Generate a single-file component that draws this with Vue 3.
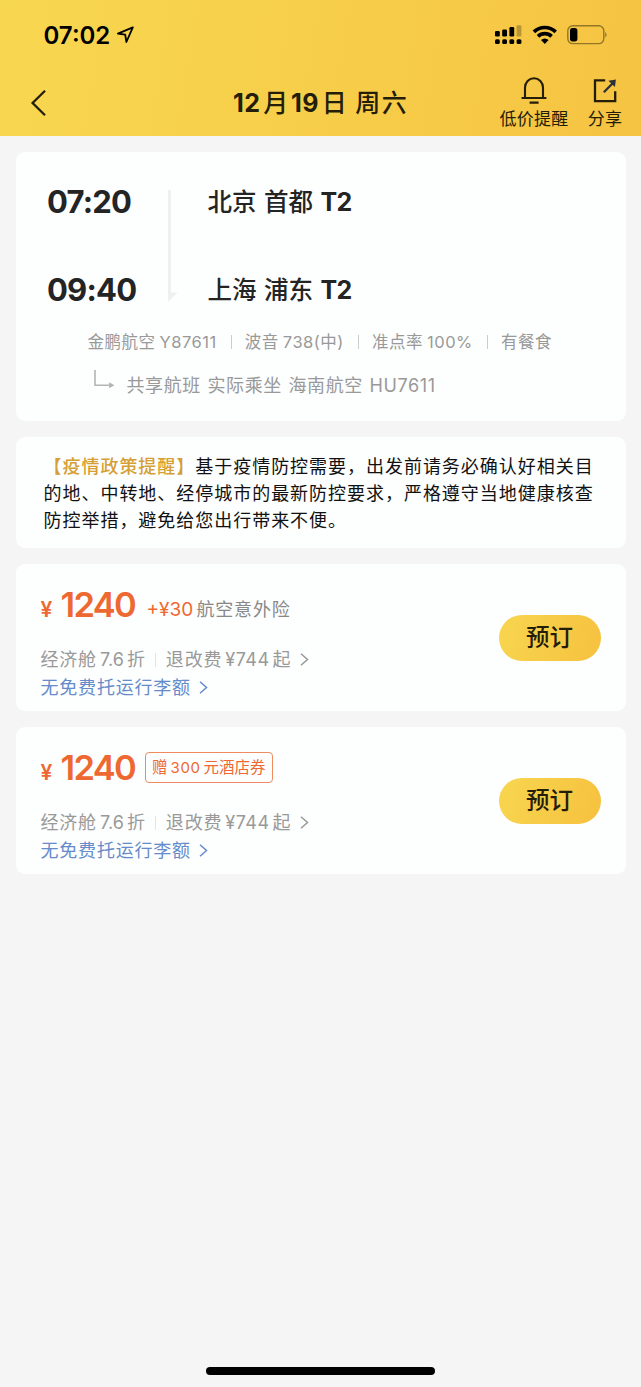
<script setup>
const offers = [
  { id: 1, price: '1240', extra: '+¥30', extraLabel: '航空意外险' },
  { id: 2, price: '1240', coupon: ['赠', '300', '元酒店券'] },
]
const stops = [
  { time: '07:20', city: '北京', airport: '首都', terminal: 'T2' },
  { time: '09:40', city: '上海', airport: '浦东', terminal: 'T2' },
]
</script>

<template>
  <div class="screen">
    <header class="top">
      <div class="status">
        <span class="clock">07:02</span>
        <svg class="loc" width="18" height="18" viewBox="0 0 18 18" fill="none" stroke="#000" stroke-width="1.8" stroke-linejoin="round">
          <path d="M15.8 1.4 L.9 7.7 L8.2 8.7 L9.4 16 Z" />
        </svg>
        <svg class="signal" width="28" height="20" viewBox="0 0 28 20">
          <rect x="0" y="6" width="4.8" height="5.5" rx="1.3" />
          <rect x="7.2" y="4.4" width="4.8" height="7.1" rx="1.3" />
          <rect x="14.4" y="2" width="4.8" height="9.5" rx="1.3" />
          <rect x="21.6" y="0.3" width="4.8" height="11.2" rx="1.3" opacity=".25" />
          <rect x="0" y="14.2" width="4.8" height="4.8" rx="1.5" />
          <rect x="7.2" y="14.2" width="4.8" height="4.8" rx="1.5" />
          <rect x="14.4" y="14.2" width="4.8" height="4.8" rx="1.5" />
          <rect x="21.6" y="14.2" width="4.8" height="4.8" rx="1.5" />
        </svg>
        <svg class="wifi" width="26" height="20" viewBox="0 0 26 20" fill="none" stroke="#000" stroke-width="3.6">
          <path d="M1.9 6.9 A15.6 15.6 0 0 1 23.7 6.9" />
          <path d="M6 11.4 A9.7 9.7 0 0 1 19.6 11.4" />
          <path d="M9 15 A5.4 5.4 0 0 1 16.6 15 L12.8 19 Z" fill="#000" stroke="none" />
        </svg>
        <svg class="battery" width="42" height="20" viewBox="0 0 42 20">
          <rect x="0.8" y="0.8" width="36" height="17.8" rx="5" fill="none" stroke="#000" stroke-opacity=".4" stroke-width="1.4" />
          <rect x="3" y="3" width="7.4" height="13.4" rx="2.6" />
          <path d="M38.3 6.7 Q40.8 9.7 38.3 12.7 Z" fill-opacity=".45" />
        </svg>
      </div>
      <div class="nav">
        <svg class="back" width="18" height="28" viewBox="0 0 18 28" fill="none" stroke="#241d08" stroke-width="2.3">
          <path d="M15 1.8 L2.6 14 L15 26.2" />
        </svg>
        <h1 class="title"><b>12</b><span>月</span><b>19</b><span>日</span><span class="week">周六</span></h1>
        <div class="action alert">
          <svg width="26" height="28" viewBox="0 0 26 28" fill="none" stroke="#241d08" stroke-width="2.1">
            <path d="M4 21 V10.6 A9 9.3 0 0 1 22 10.6 V21" />
            <path d="M.6 21 H25.4 M8.6 25.6 H17.6" />
          </svg>
          <span>低价提醒</span>
        </div>
        <div class="action share">
          <svg width="26" height="28" viewBox="0 0 26 28" fill="none" stroke="#241d08" stroke-width="2.3">
            <path d="M13.2 3.4 H3 V24.2 H23.2 V14.2" />
            <path d="M11.8 15.2 L21 6" stroke="#2b303a" />
            <path d="M16.4 3.7 L23.9 2.6 L22.9 10.1 Z" fill="#2b303a" stroke="none" />
          </svg>
          <span>分享</span>
        </div>
      </div>
    </header>

    <main class="cards">
      <section class="card flight">
        <div class="route">
          <svg class="line" width="12" height="112" viewBox="0 0 12 112" fill="#eef0f1">
            <path d="M0 0 H3 V102.5 H9.5 L0 112 Z" />
          </svg>
          <div v-for="s in stops" :key="s.time" class="stop">
            <span class="time">{{ s.time }}</span>
            <span class="place"><span class="name">{{ s.city }}</span><span class="name">{{ s.airport }}</span><b>{{ s.terminal }}</b></span>
          </div>
        </div>
        <div class="facts">
          <span class="fact">金鹏航空<i>Y87611</i></span>
          <span class="fact">波音<i>738(</i>中<i class="paren">)</i></span>
          <span class="fact">准点率<i>100%</i></span>
          <span class="fact">有餐食</span>
        </div>
        <div class="shared">
          <svg width="22" height="20" viewBox="0 0 22 20" fill="none" stroke="#b4b4b4" stroke-width="1.6">
            <path d="M1 0 V15.2 H17" />
            <path d="M15.2 12.2 L20.4 15.2 L15.2 18.2 Z" fill="#b4b4b4" stroke="none" />
          </svg>
          <span class="word">共享航班</span><span class="word">实际乘坐</span><span class="word">海南航空</span><i>HU7611</i>
        </div>
      </section>

      <section class="card notice">
        <p><strong>【疫情政策提醒】</strong>基于疫情防控需要，出发前请务必确认好相关目<br>的地、中转地、经停城市的最新防控要求，严格遵守当地健康核查<br>防控举措，避免给您出行带来不便。</p>
      </section>

      <section v-for="o in offers" :key="o.id" class="card offer">
        <div class="detail">
          <div class="pricing">
            <span class="yen">¥</span><span class="price">{{ o.price }}</span>
            <template v-if="o.extra">
              <span class="extra">{{ o.extra }}</span><span class="insurance">{{ o.extraLabel }}</span>
            </template>
            <span v-else class="coupon"><span>{{ o.coupon[0] }}</span><i>{{ o.coupon[1] }}</i><span>{{ o.coupon[2] }}</span></span>
          </div>
          <div class="terms">
            <span>经济舱</span><i>7.6</i><span>折</span>
            <span class="bar"></span>
            <span>退改费</span><i class="fee">¥744</i><span>起</span>
            <svg class="chev" width="9" height="13" viewBox="0 0 9 13" fill="none" stroke="currentColor" stroke-width="1.5"><path d="M1 .8 L7.5 6.5 L1 12.2" /></svg>
          </div>
          <div class="terms luggage">
            <span>无免费托运行李额</span>
            <svg class="chev" width="9" height="13" viewBox="0 0 9 13" fill="none" stroke="currentColor" stroke-width="1.5"><path d="M1 .8 L7.5 6.5 L1 12.2" /></svg>
          </div>
        </div>
        <button class="book">预订</button>
      </section>
    </main>
    <div class="home"></div>
  </div>
</template>

<style>
body {
  background: #f5f5f5;
}
</style>

<style scoped>
* {
  box-sizing: border-box;
}
i {
  font-style: normal;
}
svg {
  display: block;
  flex: none;
}
.screen {
  width: 641px;
  height: 1387px;
  display: flex;
  flex-direction: column;
  background: #f5f5f5;
  font-family: Inter, "Noto Sans CJK SC", sans-serif;
  white-space: nowrap;
  overflow: hidden;
}
.top {
  height: 136px;
  flex: none;
  background: linear-gradient(100deg, #f8d750 0%, #f7ce49 50%, #f5c342 100%);
  color: #241d08;
}
.status {
  height: 70px;
  display: flex;
  align-items: center;
  padding-left: 43.5px;
}
.clock {
  width: 69px;
  padding-top: 1px;
  font-size: 24px;
  font-weight: 600;
  line-height: 30px;
  color: #000;
}
.loc {
  margin: 0 0 1px 4.5px;
}
.signal {
  margin-left: 360px;
}
.wifi {
  margin-left: 8.5px;
}
.battery {
  margin-left: 9px;
}
.nav {
  height: 66px;
  display: flex;
  align-items: flex-start;
}
.back {
  margin: 18.5px 0 0 30px;
}
.title {
  display: flex;
  width: 252px;
  margin: 14.5px 0 0 185px;
  font-size: 25px;
  font-weight: 500;
  line-height: 36px;
}
.title b {
  font-weight: 700;
  letter-spacing: 0.5px;
}
.title span {
  margin: 0 2.7px;
}
.title .week {
  margin-left: 6px;
  letter-spacing: 1.5px;
}
.action {
  display: flex;
  flex-direction: column;
  align-items: center;
  margin-top: 7px;
  font-size: 17px;
  line-height: 20px;
  letter-spacing: 0.2px;
}
.action span {
  margin-top: 4px;
}
.alert {
  width: 70px;
  margin-left: 14px;
}
.share {
  width: 36px;
  margin-left: 18px;
}
.cards {
  display: flex;
  flex-direction: column;
  gap: 16px;
  padding: 16px 15.5px 0;
}
.card {
  background: #fdfefe;
  border-radius: 9px;
}
.flight {
  height: 269px;
  padding-top: 30px;
  color: #242424;
}
.route {
  position: relative;
}
.line {
  position: absolute;
  left: 152px;
  top: 8px;
}
.stop {
  display: flex;
  height: 88px;
  padding-left: 31.5px;
  line-height: 40px;
}
.time {
  width: 160.5px;
  font-size: 31px;
  font-weight: 700;
  letter-spacing: -0.8px;
}
.place {
  display: flex;
  font-size: 24.5px;
  font-weight: 500;
}
.place .name {
  width: 56.5px;
}
.place b {
  font-size: 25px;
  font-weight: 700;
  letter-spacing: -0.8px;
}
.facts {
  display: flex;
  height: 24px;
  margin: -28.5px 0 0 72px;
  font-size: 16.5px;
  line-height: 24px;
  letter-spacing: 0.5px;
  color: #999;
}
.fact {
  position: relative;
}
.fact i {
  margin-left: 4px;
}
.fact .paren {
  margin-left: 0;
}
.fact + .fact {
  margin-left: 14px;
  padding-left: 14.2px;
}
.fact + .fact::before {
  content: "";
  position: absolute;
  left: 0;
  top: 5px;
  width: 1px;
  height: 14px;
  background: #ccc;
}
.shared {
  display: flex;
  align-items: flex-start;
  margin: 19px 0 0 78.5px;
  font-size: 18px;
  line-height: 26px;
  letter-spacing: 0.6px;
  color: #999;
}
.shared svg {
  margin: -3px 10.5px 0 0;
}
.word {
  width: 81px;
}
.notice {
  height: 111px;
  padding: 16px 0 0 28px;
}
.notice p {
  margin: 0;
  font-size: 18px;
  line-height: 27px;
  letter-spacing: 0.97px;
  color: #111;
}
.notice strong {
  font-weight: 500;
  color: #d69f35;
}
.offer {
  display: flex;
  align-items: center;
  justify-content: space-between;
  height: 147px;
  padding: 0 25px;
}
.detail {
  height: 147px;
  padding-top: 18px;
}
.pricing {
  display: flex;
  align-items: baseline;
  height: 64px;
  line-height: 46px;
  color: #ee6931;
}
.yen {
  width: 20px;
  font-size: 21px;
  font-weight: 600;
}
.price {
  width: 86px;
  font-size: 34.5px;
  font-weight: 600;
  letter-spacing: -1.7px;
}
.extra {
  position: relative;
  top: -1px;
  width: 50px;
  font-size: 19px;
}
.insurance {
  position: relative;
  top: -1px;
  font-size: 18px;
  letter-spacing: 0.8px;
  color: #888;
}
.coupon {
  display: flex;
  align-self: flex-start;
  width: 127.5px;
  height: 31px;
  margin: 7px 0 0 -1.5px;
  padding-left: 6px;
  border: 1.5px solid #f08a60;
  border-radius: 4px;
  font-size: 15.5px;
  line-height: 30px;
}
.coupon i {
  margin: 0 3px;
  font-size: 15px;
  letter-spacing: 0.6px;
}
.terms {
  display: flex;
  align-items: center;
  height: 28px;
  font-size: 18px;
  line-height: 28px;
  letter-spacing: 0.8px;
  color: #999;
}
.terms i {
  margin: 0 3px;
  letter-spacing: 0.1px;
}
.terms .fee {
  letter-spacing: 0.5px;
}
.bar {
  width: 1.5px;
  height: 14px;
  margin: 0 9.5px 0 9px;
  background: #e4e4e4;
}
.chev {
  margin: -1.5px 0 0 8.5px;
}
.luggage {
  color: #658bca;
}
.book {
  width: 102px;
  height: 46px;
  padding: 0;
  border: 0;
  border-radius: 23px;
  background: linear-gradient(110deg, #f8d64f, #f6c13f);
  font: 500 23.5px/46px Inter, "Noto Sans CJK SC", sans-serif;
  color: #241d08;
}
.home {
  width: 229px;
  height: 8px;
  flex: none;
  margin: auto 0 12.5px 206px;
  border-radius: 4px;
  background: #000;
}
</style>
